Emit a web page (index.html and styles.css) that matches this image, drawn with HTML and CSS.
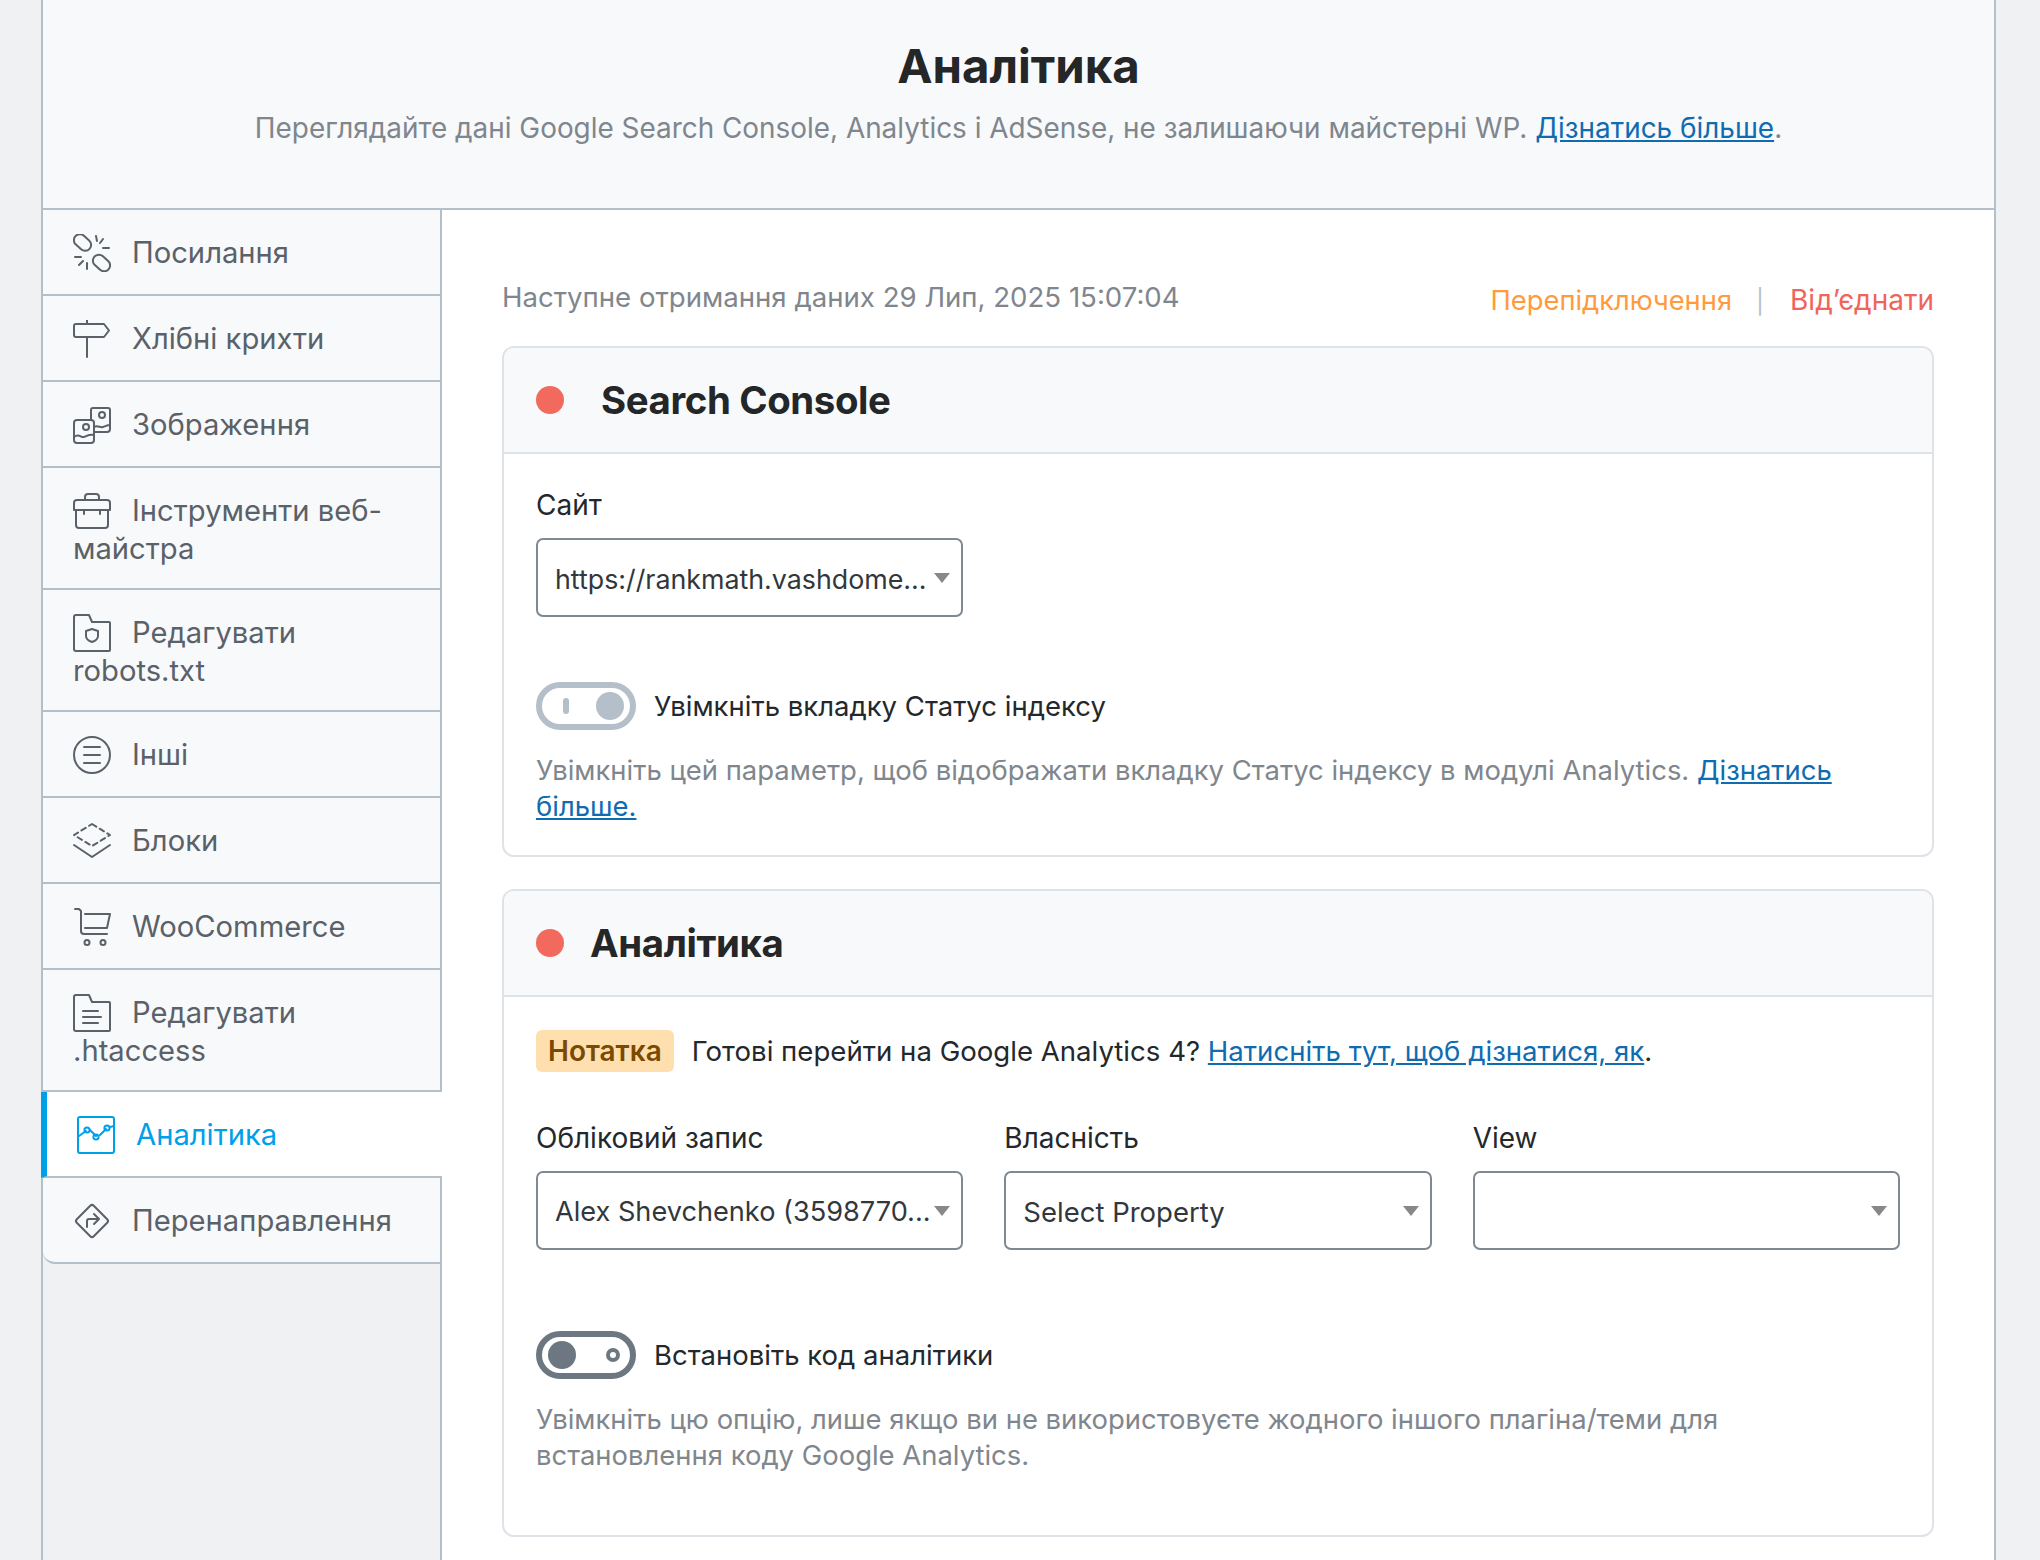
FILE: index.html
```html
<!DOCTYPE html>
<html lang="uk">
<head>
<meta charset="utf-8">
<title>Аналітика</title>
<link rel="stylesheet" href="styles.css">
</head>
<body>
<div class="wrap">
  <header class="page-head">
    <h1>Аналітика</h1>
    <p>Переглядайте дані Google Search Console, Analytics і AdSense, не залишаючи майстерні WP. <a href="#">Дізнатись більше</a>.</p>
  </header>
  <div class="body">
    <nav class="side">
      <a class="row" href="#"><svg class="ico" viewBox="0 0 38 38"><rect x="-9.5" y="-6" width="19" height="12" rx="6" transform="translate(9.5 8.5) rotate(42)"/><rect x="-9.5" y="-6" width="19" height="12" rx="6" transform="translate(28.5 29) rotate(42)"/><path d="M23 2l1 5M30 5l-3 4M36 14h-6M2 23h6M6 31l4-4M14 29v6"/></svg>Посилання</a>
      <a class="row" href="#"><svg class="ico" viewBox="0 0 38 38"><path d="M14 0v4M14 17v20M3 4h28l5 6.5-5 6.5H3a2 2 0 0 1-2-2V6a2 2 0 0 1 2-2z"/></svg>Хлібні крихти</a>
      <a class="row" href="#"><svg class="ico" viewBox="0 0 38 38"><rect x="1" y="14" width="20" height="23" rx="3"/><path d="M18 14V4a2 2 0 0 1 2-2h15a2 2 0 0 1 2 2v19a3 3 0 0 1-3 3H21M1 31c5-4 7 1 10 0s5-3 10-2M21 21c4-2 6 1 9 0s4-2 7-2"/><circle cx="13" cy="21" r="3"/><circle cx="29" cy="9" r="3"/></svg>Зображення</a>
      <a class="row row-double" href="#"><svg class="ico" viewBox="0 0 38 38"><path d="M12 8V5a3 3 0 0 1 3-3h8a3 3 0 0 1 3 3v3"/><path d="M1 11a3 3 0 0 1 3-3h30a3 3 0 0 1 3 3v7H1z"/><path d="M3 18v15a3 3 0 0 0 3 3h26a3 3 0 0 0 3-3V18M11 18v4M27 18v4"/></svg>Інструменти веб-майстра</a>
      <a class="row row-double" href="#"><svg class="ico" viewBox="0 0 38 38"><path d="M1 3a2 2 0 0 1 2-2h13l3 7h17a1 1 0 0 1 1 1v27a1 1 0 0 1-1 1H3a2 2 0 0 1-2-2z"/><path d="M19 15l6 2v5c0 3-3 5-6 6-3-1-6-3-6-6v-5z"/></svg>Редагувати robots.txt</a>
      <a class="row" href="#"><svg class="ico" viewBox="0 0 38 38"><circle cx="19" cy="19" r="18"/><path d="M11 11h16M11 19h16M11 27h16"/></svg>Інші</a>
      <a class="row" href="#"><svg class="ico" viewBox="0 0 38 38"><path class="dash" d="M19 2L37 13 19 24 1 13z"/><path d="M1 23l18 12 18-12"/></svg>Блоки</a>
      <a class="row" href="#"><svg class="ico" viewBox="0 0 38 38"><path d="M2 1h4l2 2v20a3 3 0 0 0 3 3h23M12 6h25l-3 14H12"/><circle cx="14" cy="34.5" r="2.5"/><circle cx="30" cy="34.5" r="2.5"/></svg>WooCommerce</a>
      <a class="row row-double" href="#"><svg class="ico" viewBox="0 0 38 38"><path d="M1 3a2 2 0 0 1 2-2h13l3 7h17a1 1 0 0 1 1 1v27a1 1 0 0 1-1 1H3a2 2 0 0 1-2-2z"/><path d="M10 17h15M10 23h18M10 29h15"/></svg>Редагувати .htaccess</a>
      <a class="row row-active" href="#"><svg class="ico" viewBox="0 0 38 38"><rect x="1" y="1" width="36" height="36" rx="2"/><path d="M2 20l7-5M13 14l6 6M23 19l6-6M33 11l4-1"/><circle cx="10" cy="14" r="2.6"/><circle cx="19" cy="21" r="2.6"/><circle cx="30" cy="12" r="2.6"/></svg>Аналітика</a>
      <a class="row row-last" href="#"><svg class="ico" viewBox="0 0 38 38"><rect x="7" y="7" width="24" height="24" rx="2.5" transform="rotate(45 19 19)"/><path d="M14 25v-6a2 2 0 0 1 2-2h9M21 12l5 5-5 5"/></svg>Перенаправлення</a>
    </nav>
    <main class="main">
      <div class="status">
        <span class="status-text">Наступне отримання даних 29 Лип, 2025 15:07:04</span>
        <span class="actions"><a class="reconnect" href="#">Перепідключення</a><i class="sep">|</i><a class="disconnect" href="#">Від’єднати</a></span>
      </div>
      <section class="card">
        <div class="card-head"><span class="dot"></span><h2 class="title-wide">Search Console</h2></div>
        <div class="card-body">
          <div class="field field-single">
            <label>Сайт</label>
            <div class="select select-url"><span>https://rankmath.vashdome...</span></div>
          </div>
          <div class="switch-row">
            <span class="switch switch-on"><i class="mark"></i><i class="knob"></i></span>
            <span class="switch-label">Увімкніть вкладку Статус індексу</span>
          </div>
          <p class="desc">Увімкніть цей параметр, щоб відображати вкладку Статус індексу в модулі Analytics. <a href="#">Дізнатись</a> <a href="#">більше.</a></p>
        </div>
      </section>
      <section class="card card-second">
        <div class="card-head"><span class="dot"></span><h2>Аналітика</h2></div>
        <div class="card-body card-body-second">
          <div class="note"><b>Нотатка</b><span>Готові перейти на Google Analytics 4? <a href="#">Натисніть тут, щоб дізнатися, як</a>.</span></div>
          <div class="fields">
            <div class="field"><label>Обліковий запис</label><div class="select select-account"><span>Alex Shevchenko (3598770...</span></div></div>
            <div class="field"><label>Власність</label><div class="select"><span>Select Property</span></div></div>
            <div class="field"><label>View</label><div class="select"><span></span></div></div>
          </div>
          <div class="switch-row">
            <span class="switch switch-off"><i class="knob"></i><i class="mark"></i></span>
            <span class="switch-label">Встановіть код аналітики</span>
          </div>
          <p class="desc">Увімкніть цю опцію, лише якщо ви не використовуєте жодного іншого плагіна/теми для встановлення коду Google Analytics.</p>
        </div>
      </section>
    </main>
  </div>
</div>
</body>
</html>
```
FILE: styles.css
```css
* { box-sizing: border-box; }
html, body { margin: 0; height: 100%; }
body {
  background: #f0f1f3;
  font-family: Inter, "Noto Sans", sans-serif;
  font-size: 27.5px;
  line-height: 38px;
  color: #23282d;
  overflow: hidden;
  height: 1560px;
}
a { color: #0f6cb0; }
.wrap {
  margin-left: 41px;
  width: 1955px;
  height: 1560px;
  border-left: 2px solid #b5bfc9;
  border-right: 2px solid #b5bfc9;
  display: flex;
  flex-direction: column;
}
.page-head {
  height: 210px;
  flex: none;
  background: #f8f9fb;
  border-bottom: 2px solid #b5bfc9;
  text-align: center;
  padding-top: 36px;
}
.page-head h1 {
  margin: 0 0 13px;
  font-size: 47.3px;
  line-height: 60px;
  font-weight: 700;
  color: #242628;
}
.page-head p { margin: 0; color: #7f868d; font-size: 27.9px; }
.body { flex: 1; display: flex; min-height: 0; }
.side { width: 397px; flex: none; position: relative; z-index: 1; }
.row {
  display: block;
  background: #f8f9fb;
  border-bottom: 2px solid #b5bfc9;
  padding: 24px 30px 22px;
  color: #5a6169;
  text-decoration: none;
  font-size: 29.2px;
}
.row-double { padding-bottom: 20px; }
.row-active {
  background: #fff;
  color: #00a0e9;
  border-left: 6px solid #00a0e9;
  margin: 0 -2px 0 -2px;
  padding-left: 30px;
}
.row-last { border-bottom-left-radius: 12px; }
.ico {
  width: 38px;
  height: 38px;
  display: inline-block;
  vertical-align: 1px;
  margin: -10px 21px -10px 0;
  fill: none;
  stroke: currentColor;
  stroke-width: 2;
  stroke-linecap: round;
  stroke-linejoin: round;
}
.ico .dash { stroke-dasharray: 5 4; }
.main {
  flex: 1;
  min-width: 0;
  background: #fff;
  border-left: 2px solid #b5bfc9;
  padding: 68px 60px 0 60px;
}
.status {
  display: flex;
  justify-content: space-between;
  color: #7f868d;
  margin-bottom: 28px;
}
.status-text { font-size: 27.6px; }
.actions { position: relative; top: 3px; }
.reconnect { color: #ff9a3d; text-decoration: none; font-size: 27.3px; }
.disconnect { color: #f0655b; text-decoration: none; font-size: 28px; }
.sep { font-style: normal; color: #b5bfc9; margin: 0 26px 0 24px; font-size: 24px; }
.card {
  border: 2px solid #dfe3e8;
  border-radius: 12px;
  overflow: hidden;
}
.card-second { margin-top: 32px; }
.card-head {
  height: 106px;
  background: #f8f9fb;
  border-bottom: 2px solid #dfe3e8;
  display: flex;
  align-items: center;
  padding-left: 32px;
}
.dot { width: 28px; height: 28px; border-radius: 50%; background: #f26a5e; margin-right: 26px; }
.title-wide { margin-left: 11px !important; }
.card-head h2 { margin: 0; font-size: 38.4px; line-height: 50px; font-weight: 700; color: #242628; letter-spacing: -0.4px; }
.card-body { padding: 32px 32px 31px; }
.card-body-second { padding-top: 33px; padding-bottom: 62px; }
.field { min-width: 0; }
.field label { display: block; color: #23282d; margin-bottom: 14px; font-size: 28px; }
.field-single { width: 427px; }
.select {
  height: 79px;
  border: 2px solid #7e8993;
  border-radius: 7px;
  padding: 3px 0 0 17px;
  display: flex;
  align-items: center;
  color: #32373c;
  background: #fff;
  position: relative;
  white-space: nowrap;
  overflow: hidden;
}
.select-url { font-size: 26.8px; }
.select-account { font-size: 27.15px; }
.select::after {
  content: "";
  position: absolute;
  right: 11px;
  top: 33px;
  border-left: 8px solid transparent;
  border-right: 8px solid transparent;
  border-top: 10px solid #888;
}
.switch-row { display: flex; align-items: center; margin-top: 65px; }
.switch {
  width: 100px;
  height: 48px;
  border: 6px solid #b5bfc9;
  border-radius: 24px;
  display: flex;
  align-items: center;
  justify-content: space-between;
  flex: none;
  background: #fff;
  padding: 0 6px 0 16px;
}
.switch .knob { width: 28px; height: 28px; border-radius: 50%; background: #b5bfc9; }
.switch-on .mark { width: 6px; height: 16px; background: #b5bfc9; border-radius: 3px; margin-left: 5px; }
.switch-off { border-color: #6c7781; padding: 0 10px 0 6px; }
.switch-off .knob { background: #6c7781; }
.switch-off .mark { width: 14px; height: 14px; border-radius: 50%; border: 4px solid #6c7781; }
.switch-label { margin-left: 18px; color: #23282d; }
.desc { margin: 22px 0 0; color: #7f868d; line-height: 36px; font-size: 27.45px; }
.note { display: flex; align-items: center; color: #23282d; font-size: 27.6px; }
.note b {
  background: #ffdfae;
  color: #7a4a00;
  font-weight: 600;
  font-size: 28px;
  border-radius: 6px;
  height: 42px;
  line-height: 42px;
  padding: 0 12px;
  margin-right: 18px;
}
.fields {
  display: grid;
  grid-template-columns: repeat(3, minmax(0, 1fr));
  gap: 41px;
  margin-top: 47px;
}
.fields + .switch-row { margin-top: 81px; }
```
